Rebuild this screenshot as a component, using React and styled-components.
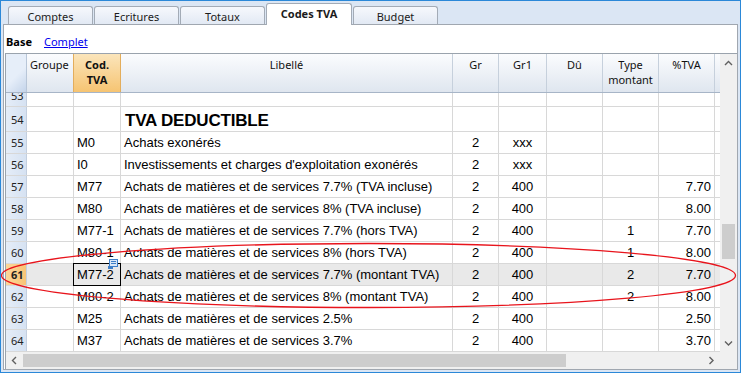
import React from 'react';
import styled, { createGlobalStyle, css } from 'styled-components';

const Global = createGlobalStyle`
  html, body { margin: 0; padding: 0; background: #ffffff; }
  * { box-sizing: border-box; }
`;

const UI = `"Noto Sans", "Open Sans", sans-serif`;
const CELL = `"Liberation Sans", Arial, sans-serif`;

const Window = styled.div`
  position: relative;
  width: 741px;
  height: 373px;
  border: 1px solid #2b88d8;
  background: #dbe6f4;
  display: flex;
  flex-direction: column;
  overflow: hidden;
`;

const TabBar = styled.div`
  height: 24px;
  display: flex;
  align-items: flex-end;
  gap: 1px;
  padding-left: 7px;
`;

const Tab = styled.div`
  width: 85px;
  height: 18px;
  border: 1px solid #a3abb6;
  border-bottom: none;
  border-radius: 3px 3px 0 0;
  background: linear-gradient(#f6f8fc, #e2e9f4);
  font-family: ${UI};
  font-size: 11px;
  color: #1b1b1b;
  display: flex;
  align-items: center;
  justify-content: center;
  padding-top: 1px;
  ${p => p.$active && css`
    height: 22px;
    width: 86px;
    margin-bottom: -1px;
    background: #ffffff;
    font-weight: 700;
    position: relative;
    z-index: 2;
    padding-bottom: 3px;
  `}
`;

const Panel = styled.div`
  flex: 1;
  margin: 0 2px 2px 2px;
  border: 1px solid #a0a7b0;
  background: #ffffff;
  display: flex;
  flex-direction: column;
  position: relative;
  z-index: 1;
`;

const ViewBar = styled.div`
  height: 28px;
  display: flex;
  align-items: center;
  gap: 12px;
  padding: 4px 0 0 2px;
  font-family: ${UI};
  font-size: 11px;
`;

const ViewLabel = styled.span`
  font-weight: 700;
  color: #000;
`;

const ViewLink = styled.span`
  color: #0000ee;
  text-decoration: underline;
`;

const Grid = styled.div`
  flex: 1;
  margin-left: 1px;
  border-top: 1px solid #9aa3ad;
  border-left: 1px solid #9aa3ad;
  display: grid;
  grid-template-columns: 1fr 17px;
  grid-template-rows: 39px 1fr 17px;
  min-height: 0;
`;

const HeaderRow = styled.div`
  display: flex;
  border-bottom: 1px solid #a7b5c7;
  background: linear-gradient(#fbfcfe, #dfe6ef);
`;

const HeadCell = styled.div`
  width: ${p => p.$w}px;
  flex: none;
  border-right: 1px solid #c6d0dc;
  padding: 3px 3px 0;
  font-family: ${UI};
  font-size: 11px;
  line-height: 15px;
  color: #111;
  text-align: ${p => p.$align || 'center'};
  ${p => p.$corner && css`
    background: linear-gradient(135deg, #e6eef9 55%, #c4d4ea);
    border-right-color: #b8c6d8;
  `}
  ${p => p.$hot && css`
    background: linear-gradient(#fbe5bb, #f6c472);
    border-right: 1px solid #e3ad5c;
    border-left: 1px solid #e3ad5c;
    margin-left: -1px;
    width: ${p.$w + 1}px;
    font-weight: 700;
  `}
`;

const HeadFill = styled.div`
  flex: 1;
`;

const Body = styled.div`
  overflow: hidden;
  min-height: 0;
`;

const BodyInner = styled.div`
  margin-top: -8px;
`;

const Row = styled.div`
  display: flex;
  height: ${p => p.$h}px;
  border-bottom: 1px solid #d8d8d8;
  background: ${p => (p.$sel ? '#e9e9e9' : '#ffffff')};
`;

const NumCell = styled.div`
  width: 21px;
  flex: none;
  border-right: 1px solid #c3cfdf;
  background: ${p => (p.$sel ? 'linear-gradient(to right, #fcd79a, #f8c476)' : 'linear-gradient(to right, #e5edf8, #d6e2f2)')};
  font-family: ${UI};
  font-size: 11px;
  font-weight: ${p => (p.$sel ? 700 : 400)};
  color: #222;
  padding-left: 5px;
  display: flex;
  align-items: center;
`;

const Cell = styled.div`
  position: relative;
  width: ${p => p.$w}px;
  flex: none;
  border-right: 1px solid #d8d8d8;
  padding: 0 3px;
  font-family: ${CELL};
  font-size: 13px;
  color: #000;
  white-space: nowrap;
  display: flex;
  align-items: center;
  justify-content: ${p => ({ left: 'flex-start', center: 'center', right: 'flex-end' }[p.$align || 'left'])};
  ${p => p.$title && css`
    font-size: 17px;
    font-weight: 700;
    padding: 3px 0 0 4px;
    letter-spacing: -0.2px;
  `}
  ${p => p.$focus && css`
    &::after {
      content: '';
      position: absolute;
      top: -1px;
      bottom: -1px;
      left: -1px;
      right: -1px;
      border: 1px solid #000;
    }
  `}
`;

const RowFill = styled.div`
  flex: 1;
`;

const NoteMark = styled.svg`
  position: absolute;
  top: -5px;
  right: 2px;
  z-index: 2;
`;

const VScroll = styled.div`
  grid-row: 1 / 3;
  grid-column: 2;
  background: #f0f0f0;
  display: flex;
  flex-direction: column;
  align-items: center;
  justify-content: space-between;
  padding: 5px 0 4px;
`;

const VThumbTrack = styled.div`
  flex: 1;
  width: 100%;
  padding: 0 2px;
  display: flex;
  flex-direction: column;
  padding-top: 156px;
`;

const VThumb = styled.div`
  height: 35px;
  background: #cdcdcd;
`;

const HScroll = styled.div`
  grid-row: 3;
  grid-column: 1;
  background: #f0f0f0;
  display: flex;
  align-items: center;
  padding: 0 4px;
`;

const HThumb = styled.div`
  width: 543px;
  height: 13px;
  margin-left: 4px;
  background: #cdcdcd;
`;

const HTrackFill = styled.div`
  flex: 1;
`;

const Corner = styled.div`
  grid-row: 3;
  grid-column: 2;
  background: #f0f0f0;
`;

const Overlay = styled.svg`
  position: absolute;
  left: -1px;
  top: -1px;
  pointer-events: none;
  z-index: 5;
`;

const Chevron = ({ dir }) => {
  const pts = {
    up: '1,6 4.5,2.5 8,6',
    down: '1,2.5 4.5,6 8,2.5',
    left: '6,1 2.5,4.5 6,8',
    right: '2.5,1 6,4.5 2.5,8',
  }[dir];
  return (
    <svg width="9" height="9" viewBox="0 0 9 9">
      <polyline points={pts} fill="none" stroke="#606060" strokeWidth="1.4" />
    </svg>
  );
};

const columns = [
  { key: 'grp', label: 'Groupe', w: 47, head: 'left' },
  { key: 'code', label: ['Cod.', 'TVA'], w: 47, hot: true },
  { key: 'lib', label: 'Libellé', w: 332 },
  { key: 'gr', label: 'Gr', w: 46, align: 'center' },
  { key: 'gr1', label: 'Gr1', w: 48, align: 'center' },
  { key: 'du', label: 'Dû', w: 56, align: 'center' },
  { key: 'type', label: ['Type', 'montant'], w: 56, align: 'center' },
  { key: 'pct', label: '%TVA', w: 56, align: 'right' },
];

const base = 'Achats de matières et de services ';

const rows = [
  { n: 53 },
  { n: 54, lib: 'TVA DEDUCTIBLE', title: true, h: 25 },
  { n: 55, code: 'M0', lib: 'Achats exonérés', gr: '2', gr1: 'xxx' },
  { n: 56, code: 'I0', lib: "Investissements et charges d'exploitation exonérés", gr: '2', gr1: 'xxx' },
  { n: 57, code: 'M77', lib: base + '7.7% (TVA incluse)', gr: '2', gr1: '400', pct: '7.70' },
  { n: 58, code: 'M80', lib: base + '8% (TVA incluse)', gr: '2', gr1: '400', pct: '8.00' },
  { n: 59, code: 'M77-1', lib: base + '7.7% (hors TVA)', gr: '2', gr1: '400', type: '1', pct: '7.70' },
  { n: 60, code: 'M80-1', lib: base + '8% (hors TVA)', gr: '2', gr1: '400', type: '1', pct: '8.00' },
  { n: 61, code: 'M77-2', lib: base + '7.7% (montant TVA)', gr: '2', gr1: '400', type: '2', pct: '7.70', sel: true },
  { n: 62, code: 'M80-2', lib: base + '8% (montant TVA)', gr: '2', gr1: '400', type: '2', pct: '8.00' },
  { n: 63, code: 'M25', lib: base + '2.5%', gr: '2', gr1: '400', pct: '2.50' },
  { n: 64, code: 'M37', lib: base + '3.7%', gr: '2', gr1: '400', pct: '3.70' },
];

const tabs = ['Comptes', 'Ecritures', 'Totaux', 'Codes TVA', 'Budget'];

export default function App() {
  return (
    <>
      <Global />
      <Window>
        <TabBar>
          {tabs.map(t => (
            <Tab key={t} $active={t === 'Codes TVA'}>{t}</Tab>
          ))}
        </TabBar>
        <Panel>
          <ViewBar>
            <ViewLabel>Base</ViewLabel>
            <ViewLink>Complet</ViewLink>
          </ViewBar>
          <Grid>
            <HeaderRow>
              <HeadCell $w={21} $corner />
              {columns.map(c => (
                <HeadCell key={c.key} $w={c.w} $align={c.head} $hot={c.hot}>
                  {Array.isArray(c.label)
                    ? c.label.map(l => <div key={l}>{l}</div>)
                    : c.label}
                </HeadCell>
              ))}
              <HeadFill />
            </HeaderRow>
            <Body>
              <BodyInner>
                {rows.map(r => (
                  <Row key={r.n} $h={r.h || 22} $sel={r.sel}>
                    <NumCell $sel={r.sel}>{r.n}</NumCell>
                    {columns.map(c => (
                      <Cell
                        key={c.key}
                        $w={c.w}
                        $align={c.align}
                        $title={c.key === 'lib' && r.title}
                        $focus={c.key === 'code' && r.sel}
                      >
                        {r[c.key]}
                        {c.key === 'code' && r.sel && (
                          <NoteMark width="10" height="10" viewBox="0 0 10 10">
                            <rect x="1.5" y="0.5" width="8" height="7" fill="#dbe8f7" stroke="#3f7fc8" />
                            <line x1="3" y1="2.5" x2="8" y2="2.5" stroke="#3f7fc8" />
                            <line x1="3" y1="4.5" x2="8" y2="4.5" stroke="#3f7fc8" />
                            <rect x="0" y="7" width="5" height="3" fill="#3f7fc8" />
                          </NoteMark>
                        )}
                      </Cell>
                    ))}
                    <RowFill />
                  </Row>
                ))}
              </BodyInner>
            </Body>
            <VScroll>
              <Chevron dir="up" />
              <VThumbTrack>
                <VThumb />
              </VThumbTrack>
              <Chevron dir="down" />
            </VScroll>
            <HScroll>
              <Chevron dir="left" />
              <HThumb />
              <HTrackFill />
              <Chevron dir="right" />
            </HScroll>
            <Corner />
          </Grid>
        </Panel>
        <Overlay width="741" height="375">
          <ellipse cx="368.5" cy="275.5" rx="367" ry="32" fill="none" stroke="#e8141c" strokeWidth="1.3" />
        </Overlay>
      </Window>
    </>
  );
}
